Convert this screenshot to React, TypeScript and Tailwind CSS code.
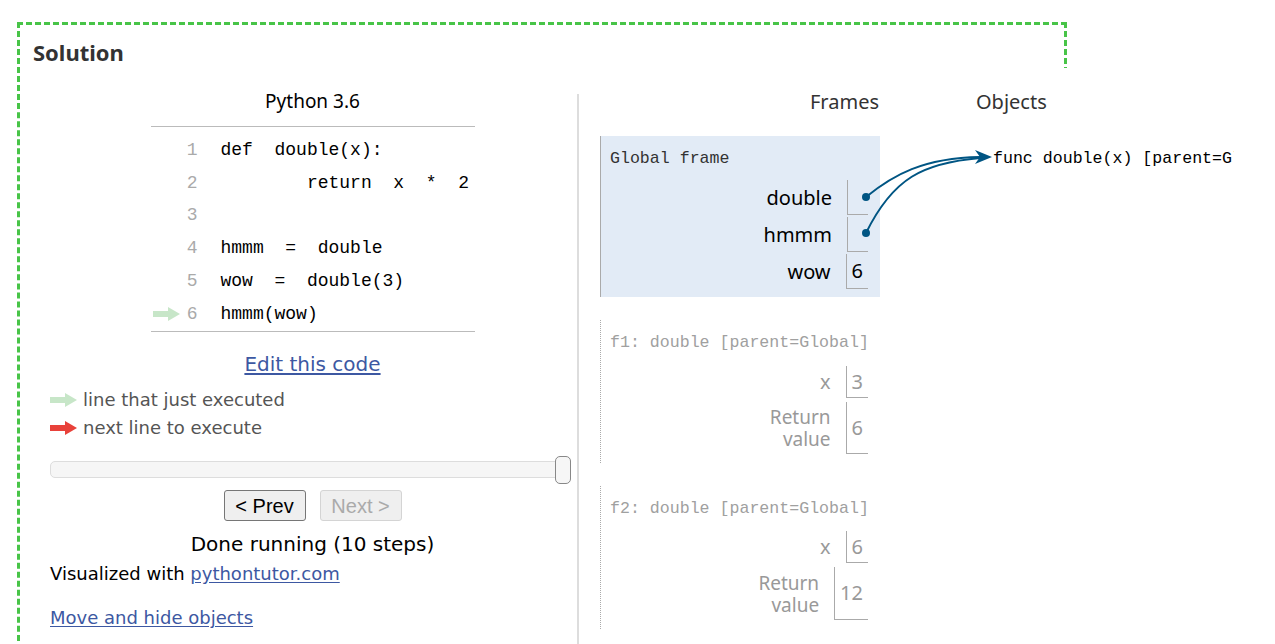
import React from 'react';

const codeLines = [
  'def  double(x):',
  '        return  x  *  2',
  '',
  'hmmm  =  double',
  'wow  =  double(3)',
  'hmmm(wow)',
];

const Arrow = ({ color }: { color: string }) => (
  <svg width="27" height="14" viewBox="0 0 27 14" className="shrink-0">
    <rect x="0" y="4" width="17" height="6" fill={color} />
    <polygon points="15,0 27,7 15,14" fill={color} />
  </svg>
);

type Row = { name: React.ReactNode; value: string; h: string; small?: boolean };

const FrameRows = ({ rows, gap, muted }: { rows: Row[]; gap: string; muted?: boolean }) => (
  <div className={`flex flex-col ${gap}`}>
    {rows.map((r, i) => (
      <div key={i} className="flex items-center justify-end mr-[12px]">
        <div
          className={`text-right pr-[15px] leading-[22px] ${r.small ? 'text-[19px]' : 'text-[20px]'} ${muted ? 'text-[#999]' : 'text-black'}`}
        >
          {r.name}
        </div>
        <div
          className={`${r.h} min-w-[21px] px-[5px] flex items-center border-l border-b border-[#aaa] text-[20px] ${muted ? 'text-[#999]' : 'text-black'}`}
        >
          {r.value}
        </div>
      </div>
    ))}
  </div>
);

const returnLabel = (
  <>
    <div>Return</div>
    <div>value</div>
  </>
);

export default function App() {
  return (
    <div className="min-h-screen bg-white pt-[22px] pl-[17px] font-['Noto_Sans',sans-serif] overflow-hidden h-[644px]">
      <div className="w-[1050px] border-[3px] border-dashed border-[#48c448] pl-[13px] pt-[12px] border-b-0 h-[700px]">
        <h2 className="text-[22px] leading-[30px] font-bold text-[#333] font-['Noto_Sans',sans-serif]">Solution</h2>

        {/* visualizer */}
        <div className="relative mt-px w-[1201px] h-[600px] bg-white overflow-hidden flex items-start">
          {/* left panel: code + controls */}
          <div className="ml-[15px] w-[529px] shrink-0 flex flex-col">
            <div className="mt-[18px] h-[30px] leading-[30px] text-center text-[19px] text-black">Python 3.6</div>
            <div className="mt-[10px] self-center w-[324px] border-t border-b border-[#bbb] pt-[7px] font-['Liberation_Mono',monospace] text-[18px]">
              {codeLines.map((line, i) => (
                <div key={i} className="h-[32.8px] flex items-center">
                  <div className="w-[30px] pl-[2px] flex items-center">
                    {i === 5 && <Arrow color="#c7e6c8" />}
                  </div>
                  <div className="w-[17px] text-right text-[#aaa]">{i + 1}</div>
                  <div className="ml-[23px] whitespace-pre text-black">{line}</div>
                </div>
              ))}
            </div>

            <div className="font-['DejaVu_Sans',sans-serif]">
              <div className="mt-[17px] h-[30px] leading-[30px] text-center">
                <a className="text-[20px] text-[#3d58a2] underline underline-offset-2">Edit this code</a>
              </div>
              <div className="mt-[7px] ml-[2px] h-[28px] flex items-center gap-[6px] text-[18px] text-[#555]">
                <Arrow color="#c7e6c8" />
                <span>line that just executed</span>
              </div>
              <div className="ml-[2px] h-[28px] flex items-center gap-[6px] text-[18px] text-[#555]">
                <Arrow color="#e8413a" />
                <span>next line to execute</span>
              </div>

              <div className="relative mt-[19px] ml-[2px] w-[510px] h-[17px] rounded-[5px] border border-[#ddd] bg-[#f6f6f6]">
                <div className="absolute -right-[12px] -top-[6px] w-[16px] h-[28px] rounded-[5px] border border-[#888] bg-[#f6f6f6]" />
              </div>

              <div className="mt-[12px] flex justify-center gap-[14px] font-['Liberation_Sans',sans-serif] text-[20px]">
                <button className="w-[82px] h-[31px] pb-px rounded-[3px] border border-[#767676] bg-[#efefef] text-black">&lt; Prev</button>
                <button className="w-[82px] h-[31px] pb-px rounded-[3px] border border-[#d4d4d4] bg-[#efefef] text-[#aaa]">Next &gt;</button>
              </div>

              <div className="mt-[9px] h-[28px] leading-[28px] text-center text-[20px] text-black">Done running (10 steps)</div>
              <div className="mt-[2px] ml-[2px] h-[28px] leading-[28px] text-[18px] text-black">
                Visualized with <a className="text-[#3d58a2] underline underline-offset-2">pythontutor.com</a>
              </div>
              <div className="mt-[16px] ml-[2px] h-[28px] leading-[28px] text-[18px]">
                <a className="text-[#3d58a2] underline underline-offset-2">Move and hide objects</a>
              </div>
            </div>
          </div>

          <div className="mt-[26px] w-[2px] h-[574px] shrink-0 bg-[#ddd]" />

          {/* right panel: frames + objects */}
          <div className="ml-[21px] flex shrink-0">
            <div className="w-[280px] shrink-0 flex flex-col">
              <div className="mt-[19px] h-[30px] leading-[30px] text-right pr-px text-[20px] text-[#333]">Frames</div>

              <div className="mt-[19px] bg-[#e2ebf6] border-l border-[#aaa] pt-[12px] pb-[8px]">
                <div className="pl-[9px] h-[22px] leading-[22px] font-['Liberation_Mono',monospace] text-[16.6px] text-[#333]">Global frame</div>
                <div className="mt-[10px]">
                  <FrameRows
                    gap="gap-[2px]"
                    rows={[
                      { name: 'double', value: '', h: 'h-[35px]' },
                      { name: 'hmmm', value: '', h: 'h-[35px]' },
                      { name: 'wow', value: '6', h: 'h-[35px]' },
                    ]}
                  />
                </div>
              </div>

              <div className="mt-[23px] border-l border-dotted border-[#aaa] pt-[12px] pb-[9px]">
                <div className="pl-[9px] h-[22px] leading-[22px] font-['Liberation_Mono',monospace] text-[16.6px] text-[#a0a0a0]">f1: double [parent=Global]</div>
                <div className="mt-[12px]">
                  <FrameRows
                    muted
                    gap="gap-[4px]"
                    rows={[
                      { name: 'x', value: '3', h: 'h-[32px]' },
                      { name: returnLabel, value: '6', h: 'h-[52px]', small: true },
                    ]}
                  />
                </div>
              </div>

              <div className="mt-[23px] border-l border-dotted border-[#aaa] pt-[12px] pb-[9px]">
                <div className="pl-[9px] h-[22px] leading-[22px] font-['Liberation_Mono',monospace] text-[16.6px] text-[#a0a0a0]">f2: double [parent=Global]</div>
                <div className="mt-[11px]">
                  <FrameRows
                    muted
                    gap="gap-[4px]"
                    rows={[
                      { name: 'x', value: '6', h: 'h-[32px]' },
                      { name: returnLabel, value: '12', h: 'h-[53px]', small: true },
                    ]}
                  />
                </div>
              </div>
            </div>

            <div className="ml-[96px] shrink-0 flex flex-col">
              <div className="mt-[19px] h-[30px] leading-[30px] text-[20px] text-[#333]">Objects</div>
              <div className="mt-[31px] pl-[17px] h-[22px] leading-[22px] whitespace-nowrap font-['Liberation_Mono',monospace] text-[16.6px] text-black">
                func double(x) [parent=Global]
              </div>
            </div>
          </div>

          {/* pointer arrows */}
          <svg className="absolute left-0 top-0 pointer-events-none" width="1201" height="600">
            <g stroke="#005583" strokeWidth="2" fill="none">
              <path d="M833 129 C 860 107, 890 90, 947 89" />
              <path d="M833 165 C 860 110, 890 95, 947 90" />
            </g>
            <polygon points="959,89 942,82 947,89 942,96" fill="#005583" />
            <circle cx="833" cy="129" r="4" fill="#005583" />
            <circle cx="833" cy="165" r="4" fill="#005583" />
          </svg>
        </div>
      </div>
    </div>
  );
}
